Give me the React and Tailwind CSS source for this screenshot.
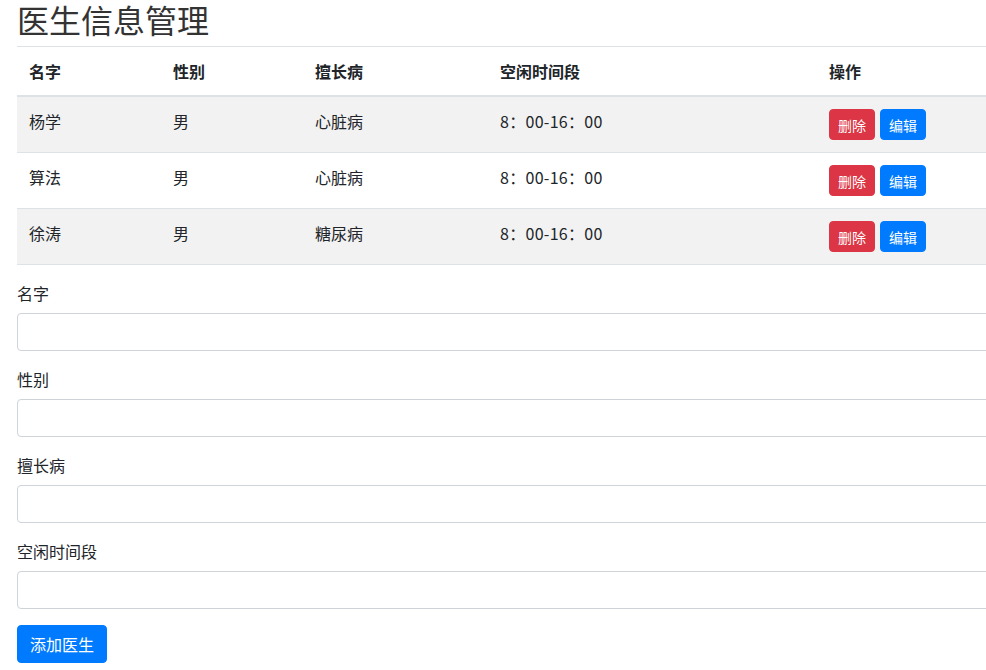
import React from 'react';

const font = { fontFamily: '"Noto Sans CJK SC", "Noto Sans", sans-serif' };

const doctors = [
    { name: '杨学', gender: '男', skill: '心脏病', time: '8：00-16：00' },
    { name: '算法', gender: '男', skill: '心脏病', time: '8：00-16：00' },
    { name: '徐涛', gender: '男', skill: '糖尿病', time: '8：00-16：00' },
];

const fields = ['名字', '性别', '擅长病', '空闲时间段'];

const App = () => {
    return (
        <div className="w-[986px] h-[670px] overflow-hidden bg-white text-[#212529]" style={font}>
            <div className="w-[1140px] pl-[17px]">
                <h2 className="text-[32px] leading-[1.2] font-normal text-[#333] mb-2">医生信息管理</h2>

                <table className="w-full border-collapse mb-4 text-base">
                    <thead>
                        <tr className="border-t border-[#dee2e6]">
                            <th className="w-[144px] text-left font-bold px-3 py-3 leading-6 border-b-2 border-[#dee2e6]">名字</th>
                            <th className="w-[142px] text-left font-bold px-3 py-3 leading-6 border-b-2 border-[#dee2e6]">性别</th>
                            <th className="w-[185px] text-left font-bold px-3 py-3 leading-6 border-b-2 border-[#dee2e6]">擅长病</th>
                            <th className="w-[329px] text-left font-bold px-3 py-3 leading-6 border-b-2 border-[#dee2e6]">空闲时间段</th>
                            <th className="text-left font-bold px-3 py-3 leading-6 border-b-2 border-[#dee2e6]">操作</th>
                        </tr>
                    </thead>
                    <tbody>
                        {doctors.map((d, i) => (
                            <tr key={i} className={`border-b border-[#dee2e6] ${i % 2 === 0 ? 'bg-[#f2f2f2]' : 'bg-white'}`}>
                                <td className="align-top px-3 pt-3 pb-3 leading-6">{d.name}</td>
                                <td className="align-top px-3 pt-3 leading-6">{d.gender}</td>
                                <td className="align-top px-3 pt-3 leading-6">{d.skill}</td>
                                <td className="align-top px-3 pt-3 leading-6 tracking-[0.3px]">{d.time}</td>
                                <td className="align-top px-3 pt-3 pb-3">
                                    <div className="flex gap-[5px]">
                                        <button className="h-[31px] px-2 text-sm text-white bg-[#dc3545] border border-[#dc3545] rounded-[4px]">删除</button>
                                        <button className="h-[31px] px-2 text-sm text-white bg-[#007bff] border border-[#007bff] rounded-[4px]">编辑</button>
                                    </div>
                                </td>
                            </tr>
                        ))}
                    </tbody>
                </table>

                <form className="flex flex-col">
                    {fields.map((f) => (
                        <div key={f} className="mb-4 flex flex-col">
                            <label className="text-base leading-6 mb-2 text-[#212529]">{f}</label>
                            <input className="h-[38px] w-full border border-[#ced4da] rounded-[4px] px-3 outline-none" />
                        </div>
                    ))}
                    <div>
                        <button type="button" className="h-[38px] px-3 text-base text-white bg-[#007bff] border border-[#007bff] rounded-[4px]">添加医生</button>
                    </div>
                </form>
            </div>
        </div>
    );
};

export default App;
